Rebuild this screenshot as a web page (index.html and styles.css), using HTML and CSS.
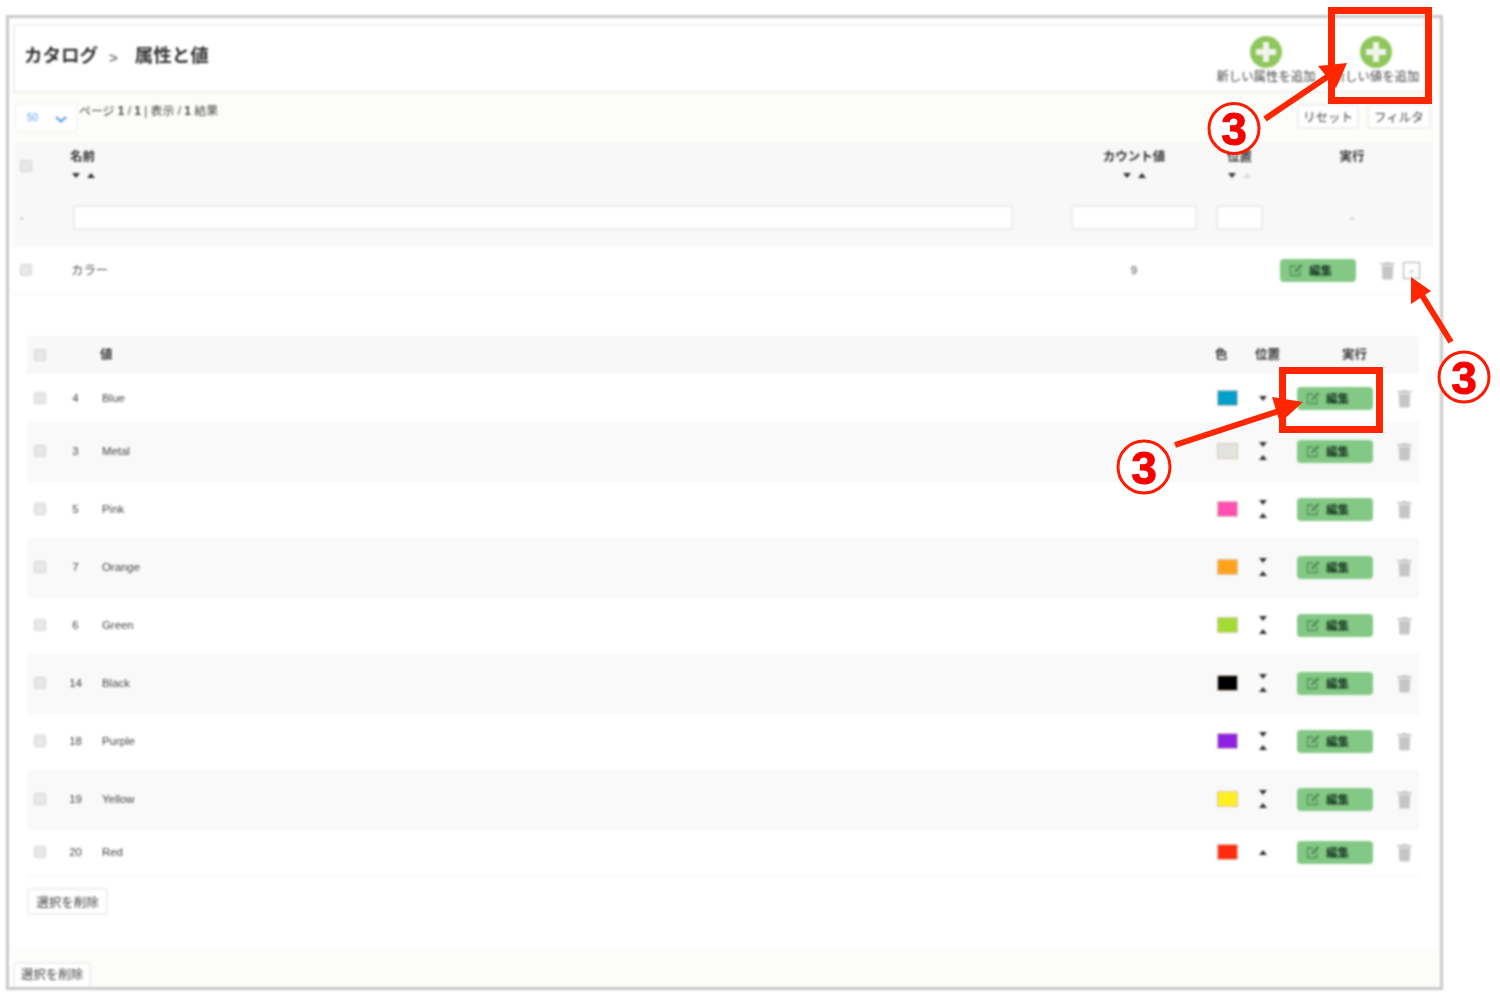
FILE: index.html
```html
<!DOCTYPE html>
<html lang="ja">
<head>
<meta charset="utf-8">
<title>属性と値</title>
<link rel="stylesheet" href="styles.css">
</head>
<body>
<svg class="defs" width="0" height="0" aria-hidden="true">
  <symbol id="trash" viewBox="0 0 16 20"><path d="M5.5 2V.8h5V2H15.500v2H.5V2z M1.800 5h12.400l-.8 14.500H2.600z" fill="#c6c6c6"/></symbol>
  <symbol id="edit" viewBox="0 0 14 14"><path d="M11 7.500V12.500H1.500V3H7" fill="none" stroke="#4f8f55" stroke-width="1.300"/><path d="M5 9.500l.6-2.500 6-6 1.900 1.900-6 6z" fill="#4f8f55"/></symbol>
  <symbol id="plus" viewBox="0 0 32 32"><circle cx="16" cy="16" r="16" fill="#8fc75c"/><path d="M13 6h6v7h7v6h-7v7h-6v-7H6v-6h7z" fill="#f0f4ec"/></symbol>
</svg>

<main class="frame">
  <header class="page-head">
    <h1 class="crumbs"><span>カタログ</span><i class="crumb-sep">&gt;</i><span>属性と値</span></h1>
    <div class="actions">
      <a class="action"><svg class="plus"><use href="#plus"/></svg><span>新しい属性を追加</span></a>
      <a class="action"><svg class="plus"><use href="#plus"/></svg><span>新しい値を追加</span></a>
    </div>
  </header>

  <div class="toolbar">
    <div class="select"><span>50</span><svg class="chev" viewBox="0 0 12 7"><path d="M1 1l5 4.500L11 1" fill="none" stroke="#4a90e8" stroke-width="1.800"/></svg></div>
    <p class="paging">ページ <b>1</b> / <b>1</b> | 表示 / <b>1</b> 結果</p>
    <div class="tool-btns"><button class="btn tool">リセット</button><button class="btn tool">フィルタ</button></div>
  </div>

  <section class="main-head">
    <div class="main-grid head-row">
      <div class="cell-check"><span class="check"></span></div>
      <div class="th">名前<div class="sorts"><i class="down"></i><i class="up"></i></div></div>
      <div class="th center count-col">カウント値<div class="sorts"><i class="down"></i><i class="up"></i></div></div>
      <div class="th center pos-col">位置<div class="sorts"><i class="down"></i><i class="up faint"></i></div></div>
      <div class="th center run-col">実行</div>
    </div>
    <div class="main-grid filter-row">
      <div class="cell-check dash">-</div>
      <div><input class="field name-field"></div>
      <div><input class="field count-field"></div>
      <div><input class="field pos-field"></div>
      <div class="run-col dash center">-</div>
    </div>
  </section>

  <div class="main-grid attr-row">
    <div class="cell-check"><span class="check"></span></div>
    <div class="muted attr-name">カラー</div>
    <div class="muted center count-col">9</div>
    <div></div>
    <div class="attr-actions">
      <button class="edit attr-edit"><svg><use href="#edit"/></svg>編集</button>
      <svg class="trash"><use href="#trash"/></svg>
      <span class="collapse">-</span>
    </div>
  </div>

  <section class="values">
    <div class="val-grid val-head">
      <div class="val-check"><span class="check"></span></div>
      <div></div>
      <div class="th name-h">値</div>
      <div class="th color-h">色</div>
      <div class="th pos-h">位置</div>
      <div class="th run-h">実行</div>
      <div></div>
    </div>

    <div class="val-grid val-row">
      <div class="val-check"><span class="check"></span></div><div class="muted val-id">4</div><div class="muted">Blue</div>
      <div><span class="swatch s-blue"></span></div>
      <div class="pos"><i class="down"></i></div>
      <div><button class="edit"><svg><use href="#edit"/></svg>編集</button></div>
      <div class="val-trash"><svg class="trash"><use href="#trash"/></svg></div>
    </div>
    <div class="val-grid val-row">
      <div class="val-check"><span class="check"></span></div><div class="muted val-id">3</div><div class="muted">Metal</div>
      <div><span class="swatch s-metal"></span></div>
      <div class="pos"><i class="down"></i><i class="up"></i></div>
      <div><button class="edit"><svg><use href="#edit"/></svg>編集</button></div>
      <div class="val-trash"><svg class="trash"><use href="#trash"/></svg></div>
    </div>
    <div class="val-grid val-row">
      <div class="val-check"><span class="check"></span></div><div class="muted val-id">5</div><div class="muted">Pink</div>
      <div><span class="swatch s-pink"></span></div>
      <div class="pos"><i class="down"></i><i class="up"></i></div>
      <div><button class="edit"><svg><use href="#edit"/></svg>編集</button></div>
      <div class="val-trash"><svg class="trash"><use href="#trash"/></svg></div>
    </div>
    <div class="val-grid val-row">
      <div class="val-check"><span class="check"></span></div><div class="muted val-id">7</div><div class="muted">Orange</div>
      <div><span class="swatch s-orange"></span></div>
      <div class="pos"><i class="down"></i><i class="up"></i></div>
      <div><button class="edit"><svg><use href="#edit"/></svg>編集</button></div>
      <div class="val-trash"><svg class="trash"><use href="#trash"/></svg></div>
    </div>
    <div class="val-grid val-row">
      <div class="val-check"><span class="check"></span></div><div class="muted val-id">6</div><div class="muted">Green</div>
      <div><span class="swatch s-green"></span></div>
      <div class="pos"><i class="down"></i><i class="up"></i></div>
      <div><button class="edit"><svg><use href="#edit"/></svg>編集</button></div>
      <div class="val-trash"><svg class="trash"><use href="#trash"/></svg></div>
    </div>
    <div class="val-grid val-row">
      <div class="val-check"><span class="check"></span></div><div class="muted val-id">14</div><div class="muted">Black</div>
      <div><span class="swatch s-black"></span></div>
      <div class="pos"><i class="down"></i><i class="up"></i></div>
      <div><button class="edit"><svg><use href="#edit"/></svg>編集</button></div>
      <div class="val-trash"><svg class="trash"><use href="#trash"/></svg></div>
    </div>
    <div class="val-grid val-row">
      <div class="val-check"><span class="check"></span></div><div class="muted val-id">18</div><div class="muted">Purple</div>
      <div><span class="swatch s-purple"></span></div>
      <div class="pos"><i class="down"></i><i class="up"></i></div>
      <div><button class="edit"><svg><use href="#edit"/></svg>編集</button></div>
      <div class="val-trash"><svg class="trash"><use href="#trash"/></svg></div>
    </div>
    <div class="val-grid val-row">
      <div class="val-check"><span class="check"></span></div><div class="muted val-id">19</div><div class="muted">Yellow</div>
      <div><span class="swatch s-yellow"></span></div>
      <div class="pos"><i class="down"></i><i class="up"></i></div>
      <div><button class="edit"><svg><use href="#edit"/></svg>編集</button></div>
      <div class="val-trash"><svg class="trash"><use href="#trash"/></svg></div>
    </div>
    <div class="val-grid val-row">
      <div class="val-check"><span class="check"></span></div><div class="muted val-id">20</div><div class="muted">Red</div>
      <div><span class="swatch s-red"></span></div>
      <div class="pos"><i class="up"></i></div>
      <div><button class="edit"><svg><use href="#edit"/></svg>編集</button></div>
      <div class="val-trash"><svg class="trash"><use href="#trash"/></svg></div>
    </div>

    <button class="btn del-inner">選択を削除</button>
  </section>

  <footer class="foot"><button class="btn del-outer">選択を削除</button></footer>
</main>

<svg class="marks" viewBox="0 0 1500 997" aria-hidden="true">
  <g fill="none" stroke="#ff2600" stroke-width="7">
    <rect x="1331.500" y="10.500" width="97" height="90"/>
    <rect x="1282.500" y="370.500" width="97" height="59"/>
  </g>
  <g stroke="#ff2600" stroke-width="6">
    <line x1="1265" y1="119" x2="1330" y2="75"/>
    <line x1="1175" y1="445" x2="1285" y2="409"/>
    <line x1="1451" y1="342" x2="1420" y2="292"/>
  </g>
  <g fill="#ff2600">
    <polygon points="1347,63 1336,88 1318,66"/>
    <polygon points="1303,402 1280,423 1272,397"/>
    <polygon points="1411,277 1431,291 1411,304"/>
  </g>
  <g class="badge">
    <circle cx="1234" cy="128.500" r="25"/><text x="1234" y="145">3</text>
    <circle cx="1464" cy="377" r="25"/><text x="1464" y="393.500">3</text>
    <circle cx="1144" cy="467" r="26"/><text x="1144" y="483.500">3</text>
  </g>
</svg>
</body>
</html>
```
FILE: styles.css
```css
* { box-sizing: border-box; }
html, body { margin: 0; height: 997px; overflow: hidden; background: #fff; }
body { font-family: "Liberation Sans", "Noto Sans CJK JP", sans-serif; color: #555; font-size: 11px; }
.defs { position: absolute; }

.frame {
  width: 1437px; height: 975px; margin: 15px 0 0 6px;
  border: 3px solid #c9c9c9; background: #fff;
  display: flex; flex-direction: column; padding-left: 4px;
  filter: blur(.85px);
}

.page-head {
  width: 1420px; height: 69px; margin-top: 6px; flex: none;
  border: 2px solid #efefef; display: flex; justify-content: space-between;
}
.crumbs { margin: 5px 0 0 9px; font-size: 18.500px; line-height: 26px; font-weight: 700; color: #333; display: flex; align-items: center; height: 50px; }
.crumb-sep { font-style: normal; font-size: 15px; color: #777; margin: 4px 17px 0 11px; }
.actions { display: flex; }
.action { width: 110px; display: flex; flex-direction: column; align-items: center; padding-top: 10px; font-size: 12.400px; color: #444; white-space: nowrap; }
.plus { width: 32px; height: 32px; display: block; }
.action span { line-height: 16px; margin-top: 1px; }

.toolbar { width: 1420px; height: 49px; flex: none; background: #fcfcf8; display: flex; padding-left: 2px; }
.select { width: 62px; height: 29px; margin-top: 10px; background: #fff; border: 1px solid #f0f0f0; border-radius: 3px; display: flex; align-items: center; justify-content: space-between; padding: 0 9px 0 11px; color: #5a9cf0; font-size: 10px; }
.chev { width: 12px; height: 7px; margin-top: 3px; }
.paging { margin: 10px 0 0 2px; font-size: 11.900px; line-height: 16px; color: #444; }
.tool-btns { margin-left: auto; display: flex; gap: 8px; padding: 11px 2px 0 0; }
.btn { background: #fff; border: 2px solid #f0f0f0; border-radius: 3px; font: inherit; color: #444; padding: 0; }
.tool { height: 25px; width: 62px; font-size: 12.500px; }
.tool + .tool { width: 64px; }

.main-grid { display: grid; grid-template-columns: 57px 1001px 145px 64px 153px; width: 1420px; }
.main-head { background: #f8f8f8; width: 1420px; height: 105px; flex: none; }
.head-row { height: 53px; padding-top: 7px; }
.filter-row { height: 52px; padding-top: 10px; }
.cell-check { padding-left: 7px; }
.head-row .cell-check { padding-top: 11px; }
.dash { color: #888; line-height: 25px; }
.check { display: block; width: 12px; height: 12px; background: #e8e8e8; border: 1px solid #d4d4d4; border-radius: 2px; }
.th { font-size: 12.500px; line-height: 16px; color: #333; font-weight: 700; }
.center { text-align: center; }
.count-col { width: 126px; }
.pos-col { width: 47px; }
.run-col { width: 144px; }
.sorts { display: flex; gap: 7px; margin-top: 8px; height: 6px; padding-left: 2px; }
.center .sorts { justify-content: center; padding-left: 0; }
.down, .up { display: block; width: 0; height: 0; border-left: 4.500px solid transparent; border-right: 4.500px solid transparent; }
.down { border-top: 5px solid #333; }
.up { border-bottom: 5px solid #333; }
.up.faint { border-bottom-color: #d8d8d8; }
.field { height: 25px; background: #fff; border: 2px solid #ececec; border-radius: 2px; display: block; padding: 0; }
.name-field { width: 940px; margin-left: 3px; }
.count-field { width: 126px; }
.pos-field { width: 47px; }

.attr-row { height: 48px; flex: none; align-items: center; border-bottom: 1px solid #f3f3f3; padding-bottom: 1px; }
.muted { color: #444; font-size: 11.400px; }
.attr-name { font-size: 12.400px; padding-left: 1px; color: #555; }
.attr-actions { display: flex; align-items: center; }
.edit { width: 76px; height: 23px; background: #83c985; border: 0; border-radius: 4px; padding: 0 0 0 9px; display: flex; align-items: center; gap: 6px; font: 700 11.500px "Noto Sans CJK JP", sans-serif; color: #163520; }
.edit svg { width: 14px; height: 14px; flex: none; }
.trash { width: 15px; height: 19px; display: block; }
.attr-edit { margin-right: 24px; }
.collapse { width: 17px; height: 17px; margin-left: 8px; border: 1px solid #aaa; background: #fff; text-align: center; line-height: 14px; color: #666; }

.values { margin: 41px 0 0 14px; width: 1392px; flex: none; }
.val-grid { display: grid; grid-template-columns: 42px 33px 1115px 37px 43px 92px 30px; align-items: center; padding-bottom: 2px; }
.val-head { height: 38px; background: #f8f8f8; padding-bottom: 1px; }
.val-check { padding-left: 7px; }
.val-id { width: 13px; text-align: center; }
.name-h { margin-left: -2px; }
.color-h { margin-left: -2px; }
.pos-h { padding-left: 1px; }
.run-h { padding-left: 45px; }
.val-row { height: 56px; background: #fff; }
.val-row:nth-of-type(odd) { height: 60px; background: #f9f9f9; }
.val-head + .val-row { height: 48px; padding-bottom: 0; }
.val-row:nth-last-of-type(1) { height: 47px; background: #fff; border-bottom: 1px solid #f3f3f3; }
.swatch { display: block; width: 21px; height: 16px; border: 1.500px solid #d8c8b4; }
.s-blue { background: #009fc9; }
.s-metal { background: #e2e4e2; }
.s-pink { background: #ff4fb2; }
.s-orange { background: #ffa31f; }
.s-green { background: #a2dc33; }
.s-black { background: #000; }
.s-purple { background: #8f22e2; }
.s-yellow { background: #ffee22; }
.s-red { background: #ff2b10; }
.pos { display: flex; flex-direction: column; gap: 8px; padding-left: 5px; align-items: flex-start; }
.val-trash { display: flex; justify-content: center; }
.del-inner { display: block; width: 81px; height: 27px; margin-top: 11px; font-size: 12.500px; }

.foot { margin-top: auto; height: 37px; width: 1424px; background: #fcfcf8; padding-top: 12px; flex: none; }
.del-outer { display: block; width: 78px; height: 25px; font-size: 12.500px; border-bottom: 0; border-radius: 3px 3px 0 0; line-height: 21px; }

.marks { position: absolute; left: 0; top: 0; width: 1500px; height: 997px; filter: blur(.5px); }
.badge circle { fill: #fff; stroke: #ff1a00; stroke-width: 3; }
.badge text { font: 700 46px "Liberation Sans", sans-serif; fill: #f60000; stroke: #f60000; stroke-width: 1; text-anchor: middle; }
```
